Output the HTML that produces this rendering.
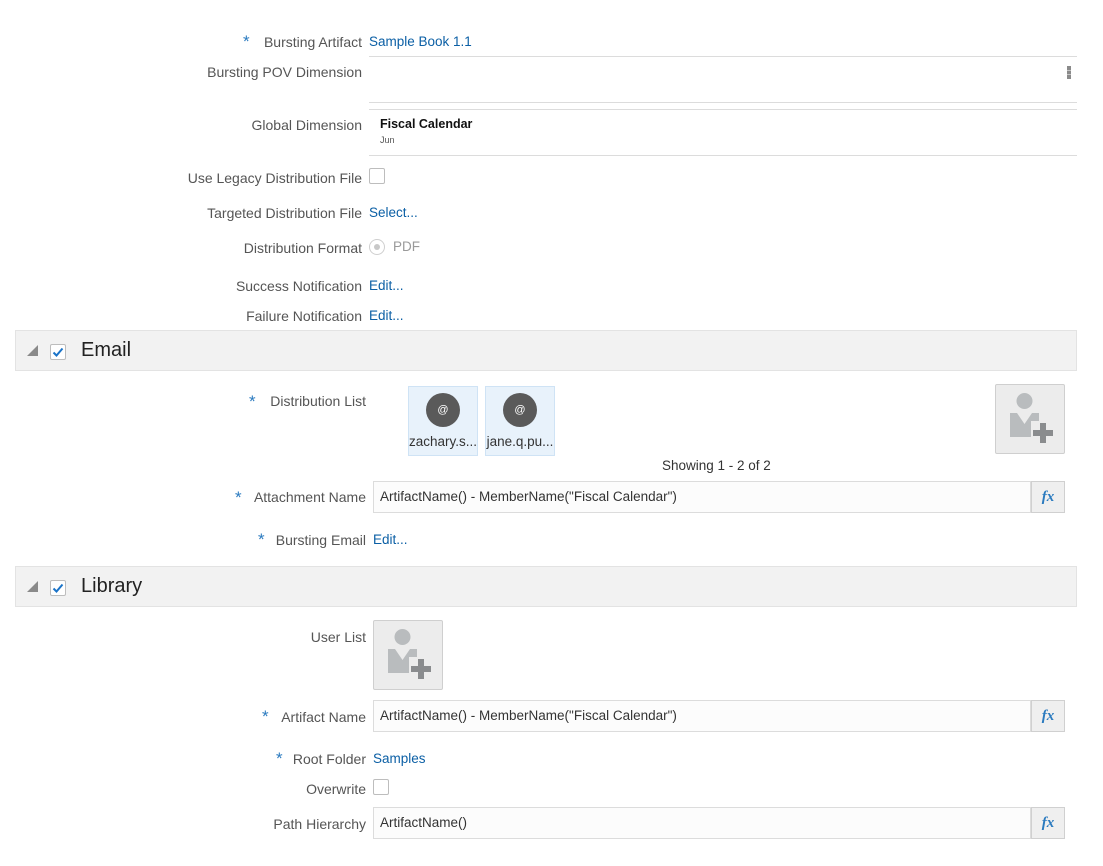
<!DOCTYPE html>
<html><head><meta charset="utf-8">
<style>
*{margin:0;padding:0;box-sizing:border-box}
body{width:1103px;height:866px;background:#fff;position:relative;overflow:hidden;font-family:"Liberation Sans",sans-serif;font-size:14px;color:#555}
.a{position:absolute;line-height:16px;white-space:nowrap}
.l{position:absolute;line-height:16px;white-space:nowrap;text-align:right}
.k{color:#0b5fa5;font-size:13.5px}
.s{position:absolute;color:#2a7abf;font-size:17px;line-height:16px}
.hl{position:absolute;height:1px;background:#dcdcdc}
.cb{position:absolute;width:16px;height:16px;border:1px solid #bdbdbd;border-radius:2px;background:#fff}
.band{position:absolute;left:15px;width:1062px;height:41px;background:#f2f2f2;border:1px solid #e3e3e3}
.band .t{position:absolute;left:65px;top:8px;font-size:20px;color:#222;line-height:22px}
.inp{position:absolute;left:373px;width:658px;height:32px;border:1px solid #dcdcdc;background:#fcfcfc;color:#333;font-size:13.5px;line-height:30px;padding-left:6px}
.fx{position:absolute;left:1031px;width:34px;height:32px;border:1px solid #d0d0d0;background:#efefef;color:#2a7abf;font-family:"Liberation Serif",serif;font-style:italic;font-weight:bold;font-size:15px;text-align:center;line-height:30px}
.card{position:absolute;top:386px;width:70px;height:70px;background:#e8f2fb;border:1px solid #cfe3f5}
.card .c{position:absolute;left:17px;top:6px;width:34px;height:34px;border-radius:50%;background:#5a5a5a;color:#fff;font-size:11px;text-align:center;line-height:34px}
.card .n{position:absolute;left:0;width:68px;top:47px;text-align:center;font-size:13.5px;color:#333;line-height:16px}
.ub{position:absolute;width:70px;height:70px;background:#ececec;border:1px solid #cfcfcf;border-radius:2px}
</style></head><body>

<span class="s" style="left:243px;top:34px">*</span>
<div class="l" style="right:741px;top:34px">Bursting Artifact</div>
<div class="a k" style="left:369px;top:34px">Sample Book 1.1</div>
<div class="hl" style="left:369px;top:56px;width:708px"></div>
<div class="l" style="right:741px;top:64px">Bursting POV Dimension</div>
<div style="position:absolute;left:1067px;top:66px;width:4px;height:13px;background:repeating-linear-gradient(#8a8a8a 0 4px,transparent 4px 4.5px)"></div>
<div class="hl" style="left:369px;top:102px;width:708px"></div>
<div class="hl" style="left:369px;top:109px;width:708px"></div>
<div class="l" style="right:741px;top:117px">Global Dimension</div>
<div class="a" style="left:380px;top:116px;font-weight:bold;color:#111;font-size:12.5px">Fiscal Calendar</div>
<div class="a" style="left:380px;top:134px;font-size:9px;color:#555;line-height:12px">Jun</div>
<div class="hl" style="left:369px;top:155px;width:708px"></div>
<div class="l" style="right:741px;top:170px">Use Legacy Distribution File</div>
<div class="cb" style="left:369px;top:168px"></div>
<div class="l" style="right:741px;top:205px">Targeted Distribution File</div>
<div class="a k" style="left:369px;top:205px">Select...</div>
<div class="l" style="right:741px;top:240px">Distribution Format</div>
<div style="position:absolute;left:369px;top:239px;width:16px;height:16px;border:1px solid #cfcfcf;border-radius:50%;background:#fff"><div style="position:absolute;left:4px;top:4px;width:6px;height:6px;border-radius:50%;background:#c8c8c8"></div></div>
<div class="a" style="left:393px;top:239px;color:#9a9a9a;font-size:13.5px">PDF</div>
<div class="l" style="right:741px;top:278px">Success Notification</div>
<div class="a k" style="left:369px;top:278px">Edit...</div>
<div class="l" style="right:741px;top:308px">Failure Notification</div>
<div class="a k" style="left:369px;top:308px">Edit...</div>

<div class="band" style="top:330px">
<svg style="position:absolute;left:11px;top:14px" width="12" height="12"><polygon points="0,11 11,11 11,0" fill="#8a8a8a"/></svg>
<div class="cb" style="left:34px;top:13px"><svg width="14" height="14" style="position:absolute;left:0;top:0"><path d="M2.5 7.5 L5.5 10.5 L11.5 3.5" stroke="#1a73c8" stroke-width="2" fill="none"/></svg></div>
<div class="t">Email</div>
</div>

<span class="s" style="left:249px;top:394px">*</span>
<div class="l" style="right:737px;top:393px">Distribution List</div>
<div class="card" style="left:408px"><div class="c">@</div><div class="n">zachary.s...</div></div>
<div class="card" style="left:485px"><div class="c">@</div><div class="n">jane.q.pu...</div></div>
<div class="ub" style="left:995px;top:384px">
<svg width="70" height="70" style="position:absolute;left:-1px;top:-1px">
<circle cx="29.5" cy="17" r="8" fill="#b9bcbe"/>
<path d="M15 29 H22 L29.5 40 L37 29 H44 V53 H15 Z" fill="#b9bcbe"/>
<rect x="36" y="37" width="24" height="24" fill="#ececec"/>
<rect x="45" y="39" width="6" height="20" fill="#8a8c8e"/>
<rect x="38" y="46" width="20" height="6" fill="#8a8c8e"/>
</svg></div>
<div class="a" style="left:662px;top:458px;color:#333;font-size:13.5px">Showing 1 - 2 of 2</div>

<span class="s" style="left:235px;top:490px">*</span>
<div class="l" style="right:737px;top:489px">Attachment Name</div>
<div class="inp" style="top:481px">ArtifactName() - MemberName("Fiscal Calendar")</div>
<div class="fx" style="top:481px">fx</div>
<span class="s" style="left:258px;top:532px">*</span>
<div class="l" style="right:737px;top:532px">Bursting Email</div>
<div class="a k" style="left:373px;top:532px">Edit...</div>

<div class="band" style="top:566px">
<svg style="position:absolute;left:11px;top:14px" width="12" height="12"><polygon points="0,11 11,11 11,0" fill="#8a8a8a"/></svg>
<div class="cb" style="left:34px;top:13px"><svg width="14" height="14" style="position:absolute;left:0;top:0"><path d="M2.5 7.5 L5.5 10.5 L11.5 3.5" stroke="#1a73c8" stroke-width="2" fill="none"/></svg></div>
<div class="t">Library</div>
</div>

<div class="l" style="right:737px;top:629px">User List</div>
<div class="ub" style="left:373px;top:620px">
<svg width="70" height="70" style="position:absolute;left:-1px;top:-1px">
<circle cx="29.5" cy="17" r="8" fill="#b9bcbe"/>
<path d="M15 29 H22 L29.5 40 L37 29 H44 V53 H15 Z" fill="#b9bcbe"/>
<rect x="36" y="37" width="24" height="24" fill="#ececec"/>
<rect x="45" y="39" width="6" height="20" fill="#8a8c8e"/>
<rect x="38" y="46" width="20" height="6" fill="#8a8c8e"/>
</svg></div>

<span class="s" style="left:262px;top:709px">*</span>
<div class="l" style="right:737px;top:709px">Artifact Name</div>
<div class="inp" style="top:700px">ArtifactName() - MemberName("Fiscal Calendar")</div>
<div class="fx" style="top:700px">fx</div>
<span class="s" style="left:276px;top:751px">*</span>
<div class="l" style="right:737px;top:751px">Root Folder</div>
<div class="a k" style="left:373px;top:751px">Samples</div>
<div class="l" style="right:737px;top:781px">Overwrite</div>
<div class="cb" style="left:373px;top:779px"></div>
<div class="l" style="right:737px;top:816px">Path Hierarchy</div>
<div class="inp" style="top:807px">ArtifactName()</div>
<div class="fx" style="top:807px">fx</div>

</body></html>
